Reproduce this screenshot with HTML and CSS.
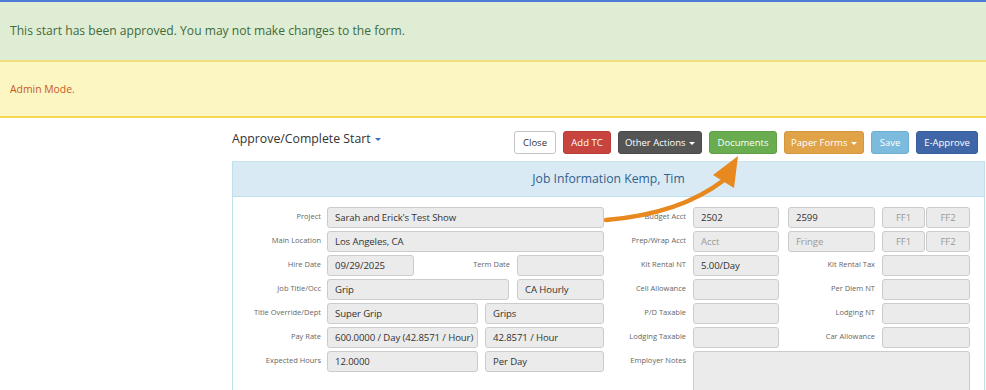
FILE: index.html
```html
<!DOCTYPE html>
<html lang="en">
<head>
<meta charset="utf-8">
<title>Approve/Complete Start</title>
<link rel="stylesheet" href="styles.css">
</head>
<body>

<div class="alert alertOk">This start has been approved. You may not make changes to the form.</div>
<div class="alert alertWarn">Admin Mode.</div>

<section class="main">
<div class="toolbar">
  <div class="pageTitle">Approve/Complete Start <span class="caret blue"></span></div>
  <div class="btns">
    <span class="btn btnDefault">Close</span>
    <span class="btn btnRed">Add TC</span>
    <span class="btn btnDark">Other Actions <span class="caret"></span></span>
    <span class="btn btnGreen">Documents</span>
    <span class="btn btnOrange">Paper Forms <span class="caret"></span></span>
    <span class="btn btnLight">Save</span>
    <span class="btn btnBlue">E-Approve</span>
  </div>
</div>

<div class="panel">
  <div class="panelHead">Job Information Kemp, Tim</div>
  <div class="panelBody">

    <!-- left half -->
    <div class="half leftHalf">
      <div class="row"><label class="lbl">Project</label><div class="fld w277">Sarah and Erick's Test Show</div></div>
      <div class="row"><label class="lbl">Main Location</label><div class="fld w277">Los Angeles, CA</div></div>
      <div class="row"><label class="lbl">Hire Date</label><div class="fld w87">09/29/2025</div><label class="lbl midLbl">Term Date</label><div class="fld w87"></div></div>
      <div class="row"><label class="lbl">Job Title/Occ</label><div class="fld w182">Grip</div><div class="fld w87 gap8">CA Hourly</div></div>
      <div class="row"><label class="lbl">Title Override/Dept</label><div class="fld w151">Super Grip</div><div class="fld w119 gap7">Grips</div></div>
      <div class="row"><label class="lbl">Pay Rate</label><div class="fld w151">600.0000 / Day (42.8571 / Hour)</div><div class="fld w119 gap7">42.8571 / Hour</div></div>
      <div class="row"><label class="lbl">Expected Hours</label><div class="fld w151">12.0000</div><div class="fld w119 gap7">Per Day</div></div>
    </div>

    <!-- right half -->
    <div class="half rightHalf">
      <div class="row"><label class="lbl">Budget Acct</label><div class="fld w86">2502</div><div class="fld w87 gap9">2599</div><div class="fld w43 gap7 ph center">FF1</div><div class="fld w44 gap1 ph center">FF2</div></div>
      <div class="row"><label class="lbl">Prep/Wrap Acct</label><div class="fld w86 ph">Acct</div><div class="fld w87 gap9 ph">Fringe</div><div class="fld w43 gap7 ph center">FF1</div><div class="fld w44 gap1 ph center">FF2</div></div>
      <div class="row"><label class="lbl">Kit Rental NT</label><div class="fld w86">5.00/Day</div><label class="lbl midLbl2">Kit Rental Tax</label><div class="fld w88"></div></div>
      <div class="row"><label class="lbl">Cell Allowance</label><div class="fld w86"></div><label class="lbl midLbl2">Per Diem NT</label><div class="fld w88"></div></div>
      <div class="row"><label class="lbl">P/D Taxable</label><div class="fld w86"></div><label class="lbl midLbl2">Lodging NT</label><div class="fld w88"></div></div>
      <div class="row"><label class="lbl">Lodging Taxable</label><div class="fld w86"></div><label class="lbl midLbl2">Car Allowance</label><div class="fld w88"></div></div>
      <div class="row"><label class="lbl">Employer Notes</label><div class="fld notes"></div></div>
    </div>

  </div>
</div>
</section>

<!-- orange arrow drawn over the form -->
<svg class="arrow" width="986" height="390" viewBox="0 0 986 390">
  <path d="M606 220 Q680 214 724 180" fill="none" stroke="#e8891f" stroke-width="4.5" stroke-linecap="round"/>
  <polygon points="738,156 713,175 734,188" fill="#e8891f"/>
</svg>

</body>
</html>
```

FILE: styles.css
```css
body {
  margin: 0;
  font-family: "Open Sans", "Liberation Sans", sans-serif;
  color: #333;
  background: white;
  border-top: 2px solid #4e7bd6;
}

.alert {
  padding-left: 10px;
}

.alertOk {
  height: 58px;
  line-height: 58px;
  background-color: #dfedd5;
  color: #3f6b3c;
  font-size: 12.1px;
  border-bottom: 2px solid #f1de7c;
}

.alertWarn {
  height: 54px;
  line-height: 54px;
  background-color: #fcf6c2;
  color: #c95a26;
  font-size: 10.4px;
  border-bottom: 2px solid #f3d84e;
}

.main {
  margin-left: 232px;
  width: 753px;
}

.toolbar {
  display: flex;
  justify-content: space-between;
  padding-top: 13px;
  padding-right: 7px;
  height: 30px;
}

.pageTitle {
  font-size: 12.3px;
  color: #333;
  line-height: 19px;
  margin-top: -2px;
}

.caret {
  display: inline-block;
  width: 0;
  height: 0;
  border-left: 3px solid transparent;
  border-right: 3px solid transparent;
  border-top: 3px solid white;
  vertical-align: middle;
  margin-left: 1px;
}

.caret.blue {
  border-top-color: #3b6cc4;
}

.btns {
  display: flex;
  gap: 7px;
}

.btn {
  height: 23px;
  line-height: 21px;
  padding: 0 9px;
  font-size: 9.5px;
  color: white;
  border: 1px solid transparent;
  border-radius: 3px;
  box-sizing: border-box;
  white-space: nowrap;
}

.btnDefault { background: white; color: #333; border-color: #c4c4c4; width: 42px; text-align: center; padding: 0; }
.btnRed { background: #c7443f; border-color: #b83c37; width: 48px; text-align: center; padding: 0; }
.btnDark { background: #555; border-color: #4a4a4a; width: 84px; text-align: center; padding: 0; }
.btnGreen { background: #69ad50; border-color: #5fa046; width: 68px; text-align: center; padding: 0; }
.btnOrange { background: #e1a348; border-color: #d4963f; width: 80px; text-align: center; padding: 0; }
.btnLight { background: #7cbbde; border-color: #6eb0d4; width: 38px; text-align: center; padding: 0; }
.btnBlue { background: #3f67a8; border-color: #365d9c; width: 62px; text-align: center; padding: 0; }

.panel {
  border: 1px solid #bce1ec;
  border-top-color: #c9e3ef;
  height: 240px;
}

.panelHead {
  height: 34px;
  line-height: 34px;
  background-color: #d9eaf5;
  border-bottom: 1px solid #bce1ec;
  text-align: center;
  color: #31618f;
  font-size: 12.2px;
}

.panelBody {
  display: flex;
  padding-top: 10px;
}

.half {
  display: flex;
  flex-direction: column;
  gap: 3px;
}

.leftHalf {
  width: 371px;
}

.row {
  display: flex;
  height: 21px;
}

.lbl {
  font-size: 7.5px;
  color: #666;
  text-align: right;
  padding-top: 4px;
  white-space: nowrap;
}

.leftHalf .lbl {
  width: 88px;
  margin-right: 6px;
}

.rightHalf .lbl {
  width: 82px;
  margin-right: 7px;
}

.leftHalf .midLbl {
  width: 96px;
  margin-right: 7px;
}

.rightHalf .midLbl2 {
  width: 96px;
  margin-right: 7px;
}

.fld {
  box-sizing: border-box;
  height: 21px;
  line-height: 19px;
  background-color: #ebebeb;
  border: 1px solid #cbcbcb;
  border-radius: 3px;
  font-size: 9.6px;
  letter-spacing: -0.1px;
  color: #333;
  padding-left: 7px;
  white-space: nowrap;
  overflow: hidden;
}

.fld.ph { color: #9a9a9a; }
.fld.center { text-align: center; padding-left: 0; }

.w277 { width: 277px; }
.w182 { width: 182px; }
.w151 { width: 151px; }
.w119 { width: 119px; }
.w88 { width: 88px; }
.w87 { width: 87px; }
.w86 { width: 86px; }
.w44 { width: 44px; }
.w43 { width: 43px; }

.gap1 { margin-left: 1px; }
.gap7 { margin-left: 7px; }
.gap8 { margin-left: 8px; }
.gap9 { margin-left: 9px; }

.notes {
  width: 277px;
  height: 60px;
}

.arrow {
  position: absolute;
  left: 0;
  top: 0;
  pointer-events: none;
}
```
